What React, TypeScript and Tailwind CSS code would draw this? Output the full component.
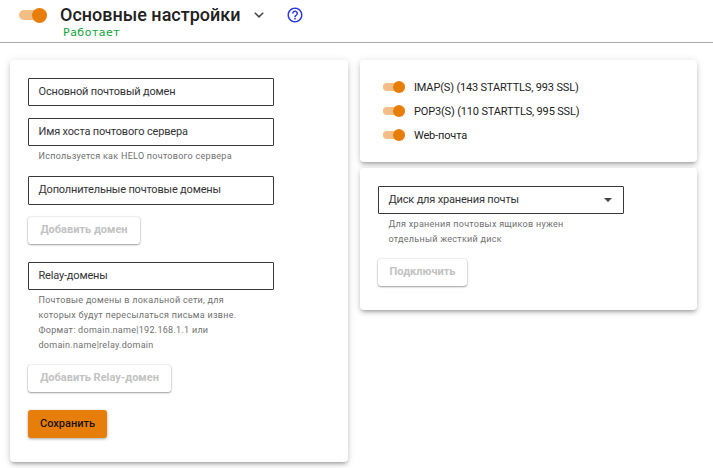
import type { ReactNode } from "react";

const cardShadow =
  "shadow-[0_3px_3px_-2px_rgba(0,0,0,0.2),0_3px_4px_0_rgba(0,0,0,0.14),0_1px_8px_0_rgba(0,0,0,0.12)]";

function Card({ className, children }: { className: string; children: ReactNode }) {
  return <section className={`rounded bg-white ${cardShadow} ${className}`}>{children}</section>;
}

function Field({ label, className = "h-7", select }: { label: string; className?: string; select?: boolean }) {
  return (
    <div
      className={`flex w-[246px] items-center justify-between rounded-[1px] border border-[#38383b] px-[9.5px] text-[11px] leading-[13px] tracking-[-0.18px] text-[#333336] ${className}`}
    >
      <span className="pb-[2px] whitespace-nowrap">{label}</span>
      {select && (
        <svg viewBox="0 0 8 4" className="mr-[2px] h-1 w-2">
          <path d="M0 0h8L4 4z" fill="#444" />
        </svg>
      )}
    </div>
  );
}

function Hint({ lines }: { lines: string[] }) {
  return (
    <div className="pl-[10.5px] text-[9px] leading-[15px] tracking-[0.28px] text-[#707070]">
      {lines.map((line) => (
        <p key={line} className="whitespace-nowrap">
          {line}
        </p>
      ))}
    </div>
  );
}

function GhostButton({ label, className }: { label: string; className: string }) {
  return (
    <button
      className={`block h-[27px] rounded-[3px] bg-white pb-[2px] text-center text-[11px] leading-[25px] font-bold whitespace-nowrap text-[#c2c2c2] shadow-[0_1px_2px_rgba(0,0,0,0.35),0_0_2px_rgba(0,0,0,0.2)] ${className}`}
    >
      {label}
    </button>
  );
}

function Service({ label }: { label: string }) {
  return (
    <div className="flex h-6 items-center">
      <span className="flex h-2 w-[22px] items-center justify-end rounded-full bg-[#f3bd83]">
        <span className="size-3 rounded-full bg-[#e87e0a]" />
      </span>
      <span className="ml-[9px] text-[11px] leading-[13px] tracking-[-0.16px] whitespace-nowrap text-[#222]">
        {label}
      </span>
    </div>
  );
}

export default function App() {
  return (
    <div className="h-[468px] w-[713px] overflow-hidden bg-white font-['Roboto',sans-serif]">
      <header className="h-[43px] border-b border-[#aaa]">
        <div className="flex h-[30px] items-center pl-[19px]">
          <span className="flex h-[10px] w-7 items-center justify-end rounded-full bg-[#f3bd83]">
            <span className="size-[15px] shrink-0 rounded-full bg-[#e87e0a]" />
          </span>
          <h1 className="ml-[13px] w-[181px] text-[18px] leading-[30px] font-medium whitespace-nowrap text-[#212121]">
            Основные настройки
          </h1>
          <svg viewBox="0 0 10 6" className="ml-[13px] h-[6px] w-[10px]" fill="none" stroke="#444" strokeWidth="1.5">
            <path d="M.8.7 5 4.9 9.2.7" />
          </svg>
          <svg viewBox="0 0 24 24" className="ml-[22px] size-[18px]" fill="#2b3be5">
            <path d="M11 18h2v-2h-2v2zm1-16C6.48 2 2 6.48 2 12s4.48 10 10 10 10-4.48 10-10S17.52 2 12 2zm0 18c-4.41 0-8-3.59-8-8s3.59-8 8-8 8 3.59 8 8-3.59 8-8 8zm0-14c-2.21 0-4 1.79-4 4h2c0-1.1.9-2 2-2s2 .9 2 2c0 2-3 1.75-3 5h2c0-2.25 3-2.5 3-5 0-2.21-1.79-4-4-4z" />
          </svg>
        </div>
        <p className="-mt-[3px] pl-[63px] font-['DejaVu_Sans',sans-serif] text-[11px] leading-[12px] tracking-[0.5px] text-[#0ba537]">
          Работает
        </p>
      </header>

      <main className="flex items-start gap-3 pt-[17px] pl-[10px]">
        <Card className="h-[402px] w-[338px] pt-[18px] pl-[18px]">
          <Field label="Основной почтовый домен" />
          <div className="mt-3 h-[58px]">
            <Field label="Имя хоста почтового сервера" />
            <div className="pt-[3px]">
              <Hint lines={["Используется как HELO почтового сервера"]} />
            </div>
          </div>
          <Field label="Дополнительные почтовые домены" className="h-[29px]" />
          <GhostButton label="Добавить домен" className="mt-3 w-[112px]" />
          <div className="mt-[18px] h-[103px]">
            <Field label="Relay-домены" />
            <div className="pt-[3px]">
              <Hint
                lines={[
                  "Почтовые домены в локальной сети, для",
                  "которых будут пересылаться письма извне.",
                  "Формат: domain.name|192.168.1.1 или",
                  "domain.name|relay.domain",
                ]}
              />
            </div>
          </div>
          <GhostButton label="Добавить Relay-домен" className="w-[143px]" />
          <button className="mt-[18px] block h-7 w-[79px] rounded-[3px] bg-[#e87e0a] pb-[1px] text-center text-[11px] leading-[27px] font-medium text-[#1c1206] shadow-[0_1px_3px_rgba(0,0,0,0.35)]">
            Сохранить
          </button>
        </Card>

        <div className="flex flex-col gap-[6px]">
          <Card className="h-[102px] w-[337px] pt-[15px] pl-[23px]">
            <Service label="IMAP(S) (143 STARTTLS, 993 SSL)" />
            <Service label="POP3(S) (110 STARTTLS, 995 SSL)" />
            <Service label="Web-почта" />
          </Card>
          <Card className="h-[142px] w-[337px] pt-[18px] pl-[18px]">
            <Field label="Диск для хранения почты" select />
            <div className="h-[45px] pt-[3px]">
              <Hint lines={["Для хранения почтовых ящиков нужен", "отдельный жесткий диск"]} />
            </div>
            <GhostButton label="Подключить" className="w-[89px]" />
          </Card>
        </div>
      </main>
    </div>
  );
}
